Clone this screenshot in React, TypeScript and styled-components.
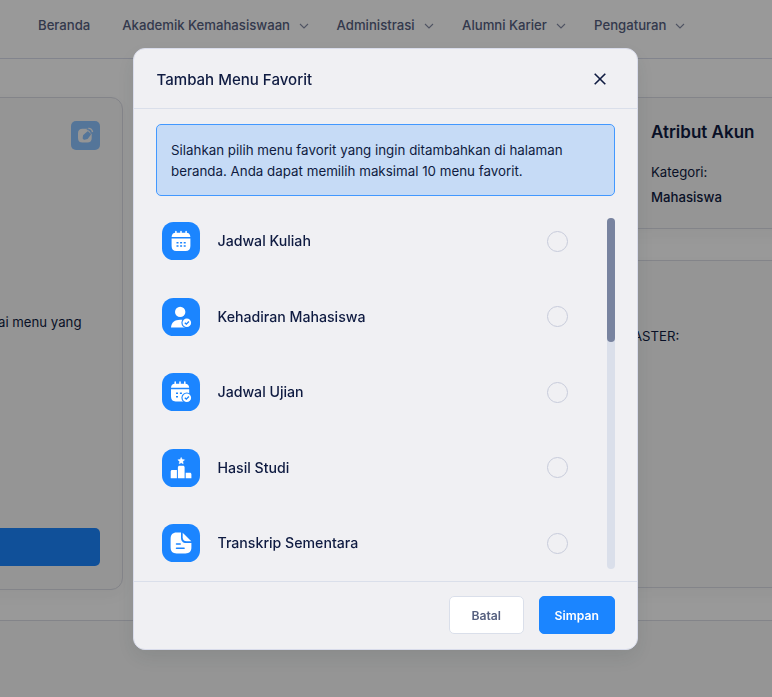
import React from 'react';
import styled, { createGlobalStyle } from 'styled-components';

const Global = createGlobalStyle`
  * { box-sizing: border-box; }
  html, body { margin: 0; padding: 0; }
  body {
    width: 772px;
    height: 697px;
    overflow: hidden;
    background: #fff;
    color: #0f1b41;
    font-family: Inter, sans-serif;
    font-size: 13.2px;
  }
  button { font-family: inherit; cursor: pointer; }
`;

const Page = styled.div`
  width: 772px;
  height: 697px;
  display: flex;
  flex-direction: column;
  overflow: hidden;
`;

const NavBar = styled.nav`
  height: 59px;
  flex: none;
  display: flex;
  align-items: center;
  padding: 0 0 8px 38px;
  border-bottom: 1px solid #d9dceb;
  color: #56607f;
`;

const NavItem = styled.a<{ $space: number }>`
  display: flex;
  align-items: center;
  gap: 9px;
  flex: none;
  width: ${(p) => p.$space}px;
  font-size: 13.15px;
  font-weight: 500;
  white-space: nowrap;
  svg { margin-top: 3px; }
`;

const Content = styled.main`
  flex: none;
  height: 561px;
  display: flex;
  padding-top: 38px;
  gap: 31px;
`;

const Card = styled.section<{ $h: number }>`
  height: ${(p) => p.$h}px;
  flex: none;
  border: 1px solid #dadce5;
  border-radius: 12px;
  background: #f8f8f8;
  box-shadow: 0 6px 14px rgba(40, 40, 60, 0.04);
`;

const MenuCard = styled(Card)`
  width: 143px;
  margin-left: -20px;
  padding: 22.5px 22.5px 23px 0;
  display: flex;
  flex-direction: column;
`;

const EditButton = styled.button`
  align-self: flex-end;
  width: 29px;
  height: 29px;
  padding: 0;
  border: 0;
  border-radius: 5px;
  background: #8dc3ff;
  display: grid;
  place-items: center;
`;

const MenuNote = styled.p`
  margin: 162px 0 0;
  padding-left: 17px;
  line-height: 20px;
  white-space: nowrap;
`;

const PrimaryBar = styled.button`
  margin-top: auto;
  height: 38px;
  flex: none;
  border: 0;
  border-radius: 5px;
  background: #1b85ff;
`;

const SideColumn = styled.div`
  flex: 1;
  margin-left: 455px;
  margin-right: -20px;
  display: flex;
  flex-direction: column;
  gap: 31px;
`;

const AttributeCard = styled(Card)`
  padding: 23px 0 0 41px;
  line-height: 25px;
  h3 { margin: 0 0 17px; font-size: 17px; line-height: 22px; font-weight: 600; }
  p { margin: 0; }
  strong { font-weight: 500; font-size: 13.2px; }
`;

const SemesterCard = styled(Card)`
  padding: 65px 0 0 23px;
  line-height: 20px;
`;

const PageFooter = styled.footer`
  flex: 1;
  border-top: 1px solid #dadce5;
  background: #f8f8f8;
`;

const Backdrop = styled.div`
  position: fixed;
  inset: 0;
  display: flex;
  align-items: flex-start;
  padding: 48px 0 0 132.5px;
  background: rgba(0, 0, 0, 0.4);
`;

const Dialog = styled.div`
  width: 505.5px;
  height: 602px;
  display: flex;
  flex-direction: column;
  border: 1px solid #d9dceb;
  border-radius: 12px;
  background: #f0f0f3;
  box-shadow: 0 8px 20px rgba(30, 50, 50, 0.1);
  overflow: hidden;
`;

const DialogHeader = styled.header`
  height: 60px;
  flex: none;
  display: flex;
  align-items: center;
  justify-content: space-between;
  padding: 1px 31.5px 0 23px;
  border-bottom: 1px solid #dadfea;
  h2 { margin: 0; font-size: 15.05px; font-weight: 500; }
`;

const CloseButton = styled.button`
  padding: 0;
  border: 0;
  background: none;
  display: flex;
`;

const DialogBody = styled.div`
  flex: 1;
  min-height: 0;
  padding: 15px 22.5px 0;
`;

const Notice = styled.p`
  margin: 0;
  height: 72px;
  padding: 14.5px 14px 0;
  border: 1px solid #4298ff;
  border-radius: 5px;
  background: #c6dbf6;
  font-size: 13.35px;
  line-height: 21px;
  white-space: nowrap;
`;

const ListArea = styled.div`
  display: flex;
  justify-content: space-between;
  height: 351px;
  margin-top: 21.5px;
`;

const MenuList = styled.ul`
  flex: none;
  width: 412px;
  margin: 0;
  padding: 4.5px 0 0 6px;
  list-style: none;
  display: flex;
  flex-direction: column;
  gap: 37.5px;
`;

const MenuRow = styled.li`
  height: 38px;
  flex: none;
  display: flex;
  align-items: center;
`;

const IconTile = styled.span`
  width: 38px;
  height: 38px;
  flex: none;
  border-radius: 11.5px;
  background: #1b85ff;
  display: grid;
  place-items: center;
`;

const RowLabel = styled.span`
  flex: 1;
  margin: -1px 0 0 17.5px;
  font-size: 14.15px;
  font-weight: 500;
`;

const Radio = styled.span`
  width: 21px;
  height: 21px;
  border: 1px solid #c7cbda;
  border-radius: 50%;
`;

const Track = styled.div`
  width: 8px;
  height: 351px;
  border-radius: 4px;
  background: #dadfea;
`;

const Thumb = styled.div`
  height: 124.5px;
  border-radius: 4px;
  background: #78839f;
`;

const DialogFooter = styled.footer`
  height: 68px;
  flex: none;
  display: flex;
  justify-content: flex-end;
  gap: 15px;
  padding: 14px 22.5px 0;
  border-top: 1px solid #dadfea;
`;

const ActionButton = styled.button<{ $primary?: boolean }>`
  width: 75.5px;
  height: 38px;
  padding: 0;
  border-radius: 5px;
  border: 1px solid ${(p) => (p.$primary ? '#1b85ff' : '#dadfea')};
  background: ${(p) => (p.$primary ? '#1b85ff' : '#fff')};
  color: ${(p) => (p.$primary ? '#fff' : '#56607f')};
  font-size: 12.2px;
  font-weight: 600;
`;

const Chevron = () => (
  <svg width="10" height="7" viewBox="0 0 10 7" fill="none" stroke="#848ca5" strokeWidth="1.1">
    <path d="M1 1l4 4 4-4" />
  </svg>
);

const CalendarIcon = () => (
  <svg width="22" height="22" viewBox="0 0 22 22" fill="#fff">
    <path d="M5.9 1.5v2M11 1.5v2M16.1 1.5v2" stroke="#fff" strokeWidth="1.5" strokeLinecap="round" />
    <path d="M1.6 7.1c.2-2.900 1.500-4.300 4-4.300h10.800c2.500 0 3.800 1.400 4 4.300zM1.600 8.600h18.800V16c0 3.300-1.600 5-4.700 5H6.300c-3.100 0-4.700-1.700-4.700-5z" />
    <path d="M6.500 12.700h2M10.100 12.700h2M13.700 12.700h2M6.500 16.100h2M10.100 16.100h2M13.700 16.100h2" stroke="#1b85ff" strokeWidth="1.5" />
  </svg>
);

const CheckBadge = () => (
  <>
    <circle cx="16.8" cy="16.8" r="5.4" fill="#1b85ff" />
    <circle cx="16.8" cy="16.8" r="4.3" fill="#fff" />
    <path d="M14.800 16.700l1.500 1.400 2.600-2.600" fill="none" stroke="#1b85ff" strokeWidth="1.3" />
  </>
);

const AttendanceIcon = () => (
  <svg width="22" height="22" viewBox="0 0 22 22" fill="#fff">
    <circle cx="10.2" cy="5.9" r="5.2" />
    <path d="M1 21.500c.2-5 3.800-7.700 9.200-7.700 4.400 0 7.200 2 8 5.500v2.200z" />
    <CheckBadge />
  </svg>
);

const ExamIcon = () => (
  <svg width="22" height="22" viewBox="0 0 22 22" fill="#fff">
    <path d="M5.200 1v3M10 1v3M14.800 1v3" stroke="#fff" strokeWidth="1.5" strokeLinecap="round" />
    <path d="M1 6.800c.2-2.700 1.500-4.100 3.800-4.100h10.400c2.400 0 3.800 1.400 4 4.100zM1 8.300h18.200v7.200c0 3.200-1.600 4.900-4.600 4.900h-9c-3 0-4.600-1.700-4.600-4.900z" />
    <path d="M6 12.200h2M9.900 12.200h2M6 15.800h2" stroke="#1b85ff" strokeWidth="1.4" />
    <CheckBadge />
  </svg>
);

const PodiumIcon = () => (
  <svg width="22" height="24" viewBox="0 0 22 24" fill="#fff">
    <path d="M11.200 1.400l1 2.100 2.300.3-1.700 1.700.4 2.300-2-1.100-2 1.100.4-2.300-1.700-1.700 2.300-.3z" stroke="#fff" strokeWidth=".5" strokeLinejoin="round" />
    <path d="M7.900 22.200V11.300c0-1 .7-1.600 1.600-1.600h3.500c.9 0 1.600.6 1.600 1.600v10.900zM.7 22.200v-6.700c0-.9.6-1.500 1.400-1.500h4.800v8.200zM15.700 22.200v-5.400h4.200c.9 0 1.500.6 1.500 1.500v3.900z" />
  </svg>
);

const DocumentIcon = () => (
  <svg width="22" height="22" viewBox="0 0 22 22" fill="#fff">
    <path d="M11 .6v5c0 3.600 1.700 5.500 5.300 5.500h5.100v4.100c0 4.100-2 6.200-6 6.200H6.600c-4 0-6-2.100-6-6.200V6.800C.6 2.700 2.600.6 6.600.6z" />
    <path d="M12.700.8l8.600 8.500h-4.700c-2.600 0-3.900-1.300-3.900-4z" />
    <path d="M6.500 12h3.700M6.500 16.200h7.600" stroke="#1b85ff" strokeWidth="1.5" strokeLinecap="round" />
  </svg>
);

const EditIcon = () => (
  <svg width="17" height="17" viewBox="0 0 17 17">
    <path d="M5.500 1.800h5.200l4 4.500V11c0 3-1.500 4.500-4.500 4.500H5.500C2.500 15.500 1 14 1 11V6.300c0-3 1.500-4.500 4.500-4.500z" fill="#f8f8f8" />
    <path d="M6.800 8.500l4-3.500 2.400 2.400-3 3.900-2.800.8-1-1z" fill="#8dc3ff" stroke="#8dc3ff" strokeWidth="1.5" strokeLinejoin="round" />
    <path d="M9.800 2.500c2.600.2 4.200 1.800 4.600 4.300" fill="none" stroke="#8dc3ff" strokeWidth="1.2" />
    <path d="M11.300 1.400c2.200-.2 4 1.400 4.200 3.700" fill="none" stroke="#f8f8f8" strokeWidth="1.4" />
  </svg>
);

const navItems = [
  { label: 'Beranda', space: 84.3, menu: false },
  { label: 'Akademik Kemahasiswaan', space: 214.3, menu: true },
  { label: 'Administrasi', space: 125.5, menu: true },
  { label: 'Alumni Karier', space: 132, menu: true },
  { label: 'Pengaturan', space: 110, menu: true },
];

const menus = [
  { label: 'Jadwal Kuliah', Icon: CalendarIcon },
  { label: 'Kehadiran Mahasiswa', Icon: AttendanceIcon },
  { label: 'Jadwal Ujian', Icon: ExamIcon },
  { label: 'Hasil Studi', Icon: PodiumIcon },
  { label: 'Transkrip Sementara', Icon: DocumentIcon },
];

export default function App() {
  return (
    <>
      <Global />
      <Page>
        <NavBar>
          {navItems.map((item) => (
            <NavItem key={item.label} $space={item.space}>
              {item.label}
              {item.menu && <Chevron />}
            </NavItem>
          ))}
        </NavBar>
        <Content>
          <MenuCard $h={493}>
            <EditButton aria-label="Edit"><EditIcon /></EditButton>
            <MenuNote>ai menu yang</MenuNote>
            <PrimaryBar aria-label="Menu" />
          </MenuCard>
          <SideColumn>
            <AttributeCard $h={132}>
              <h3>Atribut Akun</h3>
              <p>Kategori:</p>
              <strong>Mahasiswa</strong>
            </AttributeCard>
            <SemesterCard $h={328}>ASTER:</SemesterCard>
          </SideColumn>
        </Content>
        <PageFooter />
      </Page>
      <Backdrop>
        <Dialog role="dialog">
          <DialogHeader>
            <h2>Tambah Menu Favorit</h2>
            <CloseButton aria-label="Tutup">
              <svg width="12" height="12" viewBox="0 0 12 12" stroke="#0f1b41" strokeWidth="1.6">
                <path d="M.7.7l10.600 10.600M11.300.7L.7 11.300" />
              </svg>
            </CloseButton>
          </DialogHeader>
          <DialogBody>
            <Notice>
              Silahkan pilih menu favorit yang ingin ditambahkan di halaman<br />
              beranda. Anda dapat memilih maksimal 10 menu favorit.
            </Notice>
            <ListArea>
              <MenuList>
                {menus.map(({ label, Icon }) => (
                  <MenuRow key={label}>
                    <IconTile><Icon /></IconTile>
                    <RowLabel>{label}</RowLabel>
                    <Radio />
                  </MenuRow>
                ))}
              </MenuList>
              <Track><Thumb /></Track>
            </ListArea>
          </DialogBody>
          <DialogFooter>
            <ActionButton>Batal</ActionButton>
            <ActionButton $primary>Simpan</ActionButton>
          </DialogFooter>
        </Dialog>
      </Backdrop>
    </>
  );
}
